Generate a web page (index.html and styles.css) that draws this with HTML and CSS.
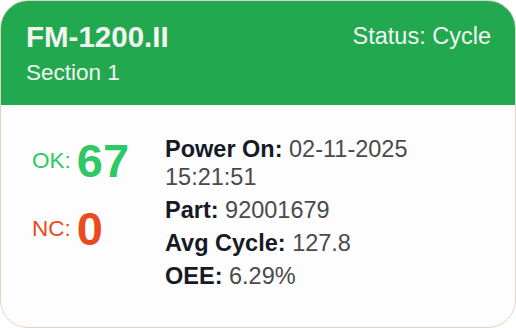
FILE: index.html
```html
<!DOCTYPE html>
<html lang="en">
<head>
    <meta charset="UTF-8">
    <meta name="viewport" content="width=device-width, initial-scale=1.0">
    <title>FM-1200.II</title>
    <link rel="stylesheet" href="styles.css">
</head>
<body>

    <div class="card">
        <div class="header">
            <div>
                <h1 class="machine">FM-1200.II</h1>
                <div class="section">Section 1</div>
            </div>
            <div class="status">Status: Cycle</div>
        </div>

        <div class="content">
            <div class="counts">
                <div class="count ok"><span class="count-label">OK:</span><span class="count-value">67</span></div>
                <div class="count nc"><span class="count-label">NC:</span><span class="count-value">0</span></div>
            </div>
            <div class="details">
                <p><strong>Power On:</strong> <span>02-11-2025</span> <span>15:21:51</span></p>
                <p><strong>Part:</strong> <span>92001679</span></p>
                <p><strong>Avg Cycle:</strong> <span>127.8</span></p>
                <p><strong>OEE:</strong> <span>6.29%</span></p>
            </div>
        </div>
    </div>

</body>
</html>
```

FILE: styles.css
```css
body {
    margin: 0;
    background: #ffffff;
    font-family: "Liberation Sans", Arial, sans-serif;
}
.card {
    width: 516px;
    height: 328px;
    box-sizing: border-box;
    border: 1px solid #ddd3c9;
    border-radius: 28px;
    overflow: hidden;
    background: #fdfdfd;
}
.header {
    height: 104px;
    box-sizing: border-box;
    padding: 19px 24px 0 25px;
    display: flex;
    justify-content: space-between;
    align-items: flex-start;
    background: #22a94f;
    color: #f2f5f2;
}
.machine {
    margin: 0;
    font-size: 29.5px;
    line-height: 33px;
    font-weight: bold;
}
.section {
    margin-top: 7px;
    font-size: 22.5px;
    line-height: 26px;
}
.status {
    margin-top: 1px;
    font-size: 23.5px;
    line-height: 30px;
}
.content {
    display: flex;
    align-items: flex-start;
    padding: 0 20px 0 31px;
}
.counts {
    width: 133px;
    padding-top: 31px;
    display: flex;
    flex-direction: column;
    gap: 18px;
}
.count {
    height: 50px;
    display: flex;
    align-items: center;
    gap: 6px;
    white-space: nowrap;
}
.count-label {
    font-size: 22.5px;
}
.count-value {
    font-size: 47px;
    font-weight: bold;
    line-height: 50px;
}
.ok {
    color: #2ec866;
}
.nc {
    color: #ec4a1e;
}
.details {
    width: 300px;
    padding-top: 30px;
    font-size: 23.5px;
    color: #4a4a4a;
}
.details p {
    margin: 0 0 5px 0;
    line-height: 28px;
}
.details strong {
    color: #161a26;
}
```
